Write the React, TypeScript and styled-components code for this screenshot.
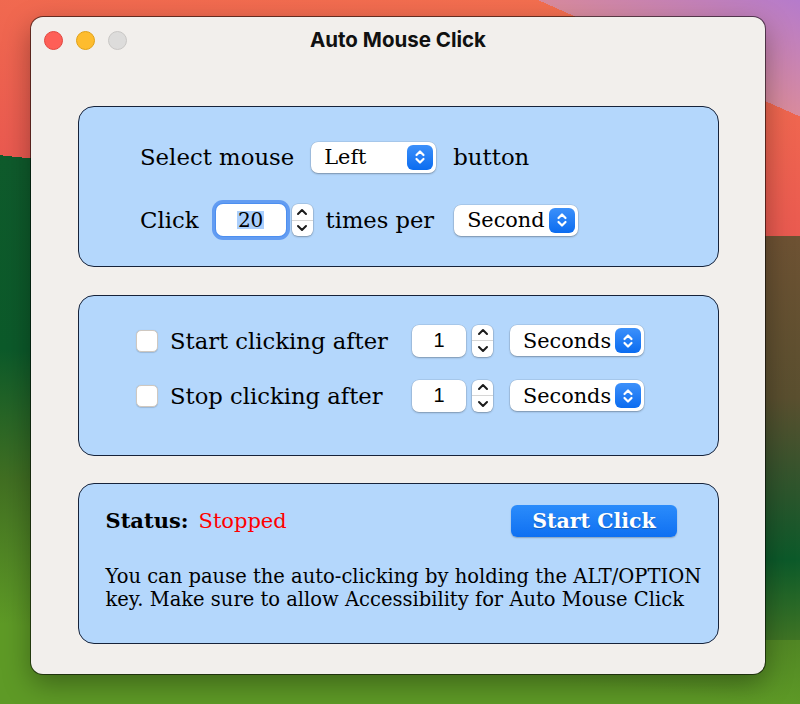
import React from 'react';
import styled, { createGlobalStyle } from 'styled-components';

const GlobalStyle = createGlobalStyle`
  html, body {
    margin: 0;
    padding: 0;
  }
  body {
    font-family: 'DejaVu Serif', 'Liberation Serif', serif;
    color: #000;
  }
`;

const Chevrons = ({ color, width = 14, height = 18 }: { color: string; width?: number; height?: number }) => (
  <svg width={width} height={height} viewBox="0 0 14 18" fill="none" stroke={color} strokeWidth={2.2} strokeLinecap="round" strokeLinejoin="round">
    <path d="M3.5 7 L7 3.5 L10.5 7" />
    <path d="M3.5 11 L7 14.5 L10.5 11" />
  </svg>
);

const Chevron = ({ up }: { up?: boolean }) => (
  <svg width={12} height={8} viewBox="0 0 12 8" fill="none" stroke="#1b1b1b" strokeWidth={2} strokeLinecap="round" strokeLinejoin="round">
    <path d={up ? 'M2 6 L6 2 L10 6' : 'M2 2 L6 6 L10 2'} />
  </svg>
);

const PopUpButton = ({ label, width }: { label: string; width?: number }) => (
  <PopUp $width={width}>
    <PopUpLabel>{label}</PopUpLabel>
    <PopUpArrows>
      <Chevrons color="#fff" />
    </PopUpArrows>
  </PopUp>
);

const Stepper = () => (
  <StepperBox>
    <StepperHalf>
      <Chevron up />
    </StepperHalf>
    <StepperHalf>
      <Chevron />
    </StepperHalf>
  </StepperBox>
);

const App = () => (
  <Page>
    <GlobalStyle />
    <Window>
      <TitleBar>
        <TrafficLights>
          <Light $fill="#fe5f57" $edge="#e2463f" />
          <Light $fill="#febc2e" $edge="#e1a116" />
          <Light $fill="#dddcdb" $edge="#c9c7c5" />
        </TrafficLights>
        <Title>Auto Mouse Click</Title>
        <span />
      </TitleBar>

      <Content>
        <ClickPanel>
          <Row $gap={17}>
            <Label>Select mouse</Label>
            <PopUpButton label="Left" width={125} />
            <Label>button</Label>
          </Row>
          <Row $gap={17}>
            <Label>Click</Label>
            <SpinGroup>
              <NumberField $width={70} $height={32} $focused>
                <Selected>20</Selected>
              </NumberField>
              <Stepper />
            </SpinGroup>
            <TightLabel>times per</TightLabel>
            <PopUpButton label="Second" />
          </Row>
        </ClickPanel>

        <TimerPanel>
          <TimerRow>
            <Checkbox />
            <TimerLabel>Start clicking after</TimerLabel>
            <SpinGroup $gap={6}>
              <NumberField $width={54} $height={32}>
                <Digits>1</Digits>
              </NumberField>
              <Stepper />
            </SpinGroup>
            <PopUpButton label="Seconds" />
          </TimerRow>
          <TimerRow>
            <Checkbox />
            <TimerLabel>Stop clicking after</TimerLabel>
            <SpinGroup $gap={6}>
              <NumberField $width={54} $height={32}>
                <Digits>1</Digits>
              </NumberField>
              <Stepper />
            </SpinGroup>
            <PopUpButton label="Seconds" />
          </TimerRow>
        </TimerPanel>

        <StatusPanel>
          <StatusRow>
            <StatusText>
              <StatusLabel>Status:</StatusLabel>
              <StatusValue>Stopped</StatusValue>
            </StatusText>
            <PrimaryButton>Start Click</PrimaryButton>
          </StatusRow>
          <Note>
            You can pause the auto-clicking by holding the ALT/OPTION
            <br />
            key. Make sure to allow Accessibility for Auto Mouse Click
          </Note>
        </StatusPanel>
      </Content>
    </Window>
  </Page>
);

const Page = styled.div`
  width: 800px;
  height: 704px;
  box-sizing: border-box;
  padding: 17px 0 0 31px;
  overflow: hidden;
  background:
    linear-gradient(24deg, transparent 862px, #d98b9d 862px, #b67bcb 967px),
    linear-gradient(180deg, #6e5233 0, #5a4f2f 40%, #0c5a2a 80%, #3f7424 100%) right 0 top 236px / 40px 404px no-repeat,
    linear-gradient(186deg, #f4714f 0, #ea5a50 238px, #0f5b2c 238px, #0c5a2a 430px, #416f22 560px, #5e9a26 704px);
`;

const Window = styled.div`
  width: 734px;
  height: 657px;
  border-radius: 12px;
  background: #f2efec;
  box-shadow: 0 0 0 1px rgba(0, 0, 0, 0.55), 0 10px 28px rgba(0, 0, 0, 0.35);
  display: flex;
  flex-direction: column;
  overflow: hidden;
`;

const TitleBar = styled.header`
  height: 46px;
  flex-shrink: 0;
  display: grid;
  grid-template-columns: 1fr auto 1fr;
  align-items: center;
  padding: 0 13px;
`;

const TrafficLights = styled.div`
  display: flex;
  gap: 13px;
`;

const Light = styled.span<{ $fill: string; $edge: string }>`
  width: 19px;
  height: 19px;
  box-sizing: border-box;
  border-radius: 50%;
  background: ${p => p.$fill};
  border: 1px solid ${p => p.$edge};
`;

const Title = styled.h1`
  margin: 0 0 1px;
  font-family: Inter, 'Noto Sans', sans-serif;
  font-weight: 700;
  font-size: 20.5px;
  color: #111;
`;

const Content = styled.main`
  display: flex;
  flex-direction: column;
  gap: 27.5px;
  padding: 43px 46px 0 47px;
`;

const Panel = styled.section`
  height: 161px;
  box-sizing: border-box;
  border: 1.5px solid #17233a;
  border-radius: 16px;
  background: #b4d7fc;
  display: flex;
  flex-direction: column;
`;

const ClickPanel = styled(Panel)`
  padding: 33.5px 0 0 61px;
  gap: 30px;
`;

const TimerPanel = styled(Panel)`
  padding: 28px 0 0 57px;
  gap: 21px;
`;

const StatusPanel = styled(Panel)`
  padding: 20.5px 41px 0 26.5px;
`;

const Row = styled.div<{ $gap: number }>`
  display: flex;
  align-items: center;
  gap: ${p => p.$gap}px;
  height: 33px;
`;

const Label = styled.span`
  font-size: 22.8px;
  white-space: nowrap;
`;

const TightLabel = styled(Label)`
  margin: 0 3px 0 -4px;
  font-size: 22.6px;
`;

const PopUp = styled.div<{ $width?: number }>`
  display: flex;
  align-items: center;
  justify-content: space-between;
  gap: 4px;
  height: 31px;
  width: ${p => (p.$width ? `${p.$width}px` : 'auto')};
  box-sizing: border-box;
  padding: 0 3px 0 13px;
  background: #fff;
  border-radius: 7px;
  box-shadow: 0 0 0 0.5px rgba(0, 0, 0, 0.12), 0 1px 2px rgba(0, 0, 0, 0.28);
`;

const PopUpLabel = styled.span`
  font-size: 20.8px;
  white-space: nowrap;
`;

const PopUpArrows = styled.span`
  width: 26px;
  height: 25px;
  border-radius: 6px;
  background: linear-gradient(#3c90fa, #0b6cf0);
  display: flex;
  align-items: center;
  justify-content: center;
`;

const SpinGroup = styled.div<{ $gap?: number }>`
  display: flex;
  align-items: center;
  gap: ${p => p.$gap ?? 6}px;
`;

const NumberField = styled.div<{ $width: number; $height: number; $focused?: boolean }>`
  width: ${p => p.$width}px;
  height: ${p => p.$height}px;
  box-sizing: border-box;
  background: #fff;
  border-radius: 7px;
  display: flex;
  align-items: center;
  justify-content: center;
  box-shadow: ${p =>
    p.$focused
      ? '0 0 0 1px #4d8ff0, 0 0 0 4px rgba(84, 146, 240, 0.85)'
      : '0 0 0 0.5px rgba(0, 0, 0, 0.12), 0 1px 2px rgba(0, 0, 0, 0.25)'};
`;

const Selected = styled.span`
  font-size: 20px;
  background: #abcffc;
  padding: 0 1px;
  line-height: 18px;
`;

const Digits = styled.span`
  font-family: 'Liberation Sans', Arial, sans-serif;
  font-size: 20px;
`;

const StepperBox = styled.div`
  width: 21px;
  height: 32px;
  box-sizing: border-box;
  background: #fff;
  border-radius: 6px;
  box-shadow: 0 0 0 0.5px rgba(0, 0, 0, 0.15), 0 1px 2px rgba(0, 0, 0, 0.25);
  display: flex;
  flex-direction: column;
`;

const StepperHalf = styled.span`
  flex: 1;
  display: flex;
  align-items: center;
  justify-content: center;

  & + & {
    border-top: 1px solid #d6d6d6;
  }
`;

const TimerRow = styled.div`
  display: grid;
  grid-template-columns: 22px 230px auto auto;
  column-gap: 12px;
  align-items: center;
  justify-items: start;
  justify-content: start;
  height: 34px;

  & > :last-child {
    margin-left: 5px;
  }
`;

const Checkbox = styled.span`
  width: 22px;
  height: 22px;
  box-sizing: border-box;
  border-radius: 5px;
  background: #fff;
  border: 1px solid #cfc8c0;
  box-shadow: 0 0.5px 1px rgba(0, 0, 0, 0.15);
`;

const TimerLabel = styled.span`
  font-size: 22.7px;
  white-space: nowrap;
`;

const StatusRow = styled.div`
  display: flex;
  align-items: center;
  justify-content: space-between;
  height: 32px;
`;

const StatusText = styled.div`
  display: flex;
  align-items: baseline;
  gap: 10px;
  font-size: 21px;
`;

const StatusLabel = styled.span`
  font-weight: 700;
`;

const StatusValue = styled.span`
  color: #ff0000;
`;

const PrimaryButton = styled.button`
  width: 166px;
  height: 32px;
  border: none;
  border-radius: 6px;
  background: linear-gradient(#2b8cfb, #0f70f2);
  box-shadow: 0 1px 1.5px rgba(0, 0, 0, 0.25);
  color: #fff;
  font-family: 'DejaVu Serif', 'Liberation Serif', serif;
  font-weight: 700;
  font-size: 20.5px;
  text-shadow: 0 1px 1px rgba(0, 0, 0, 0.25);
  padding: 0;
`;

const Note = styled.p`
  margin: 28px 0 0;
  font-size: 19.5px;
  line-height: 23.5px;
  white-space: nowrap;
`;

export default App;
